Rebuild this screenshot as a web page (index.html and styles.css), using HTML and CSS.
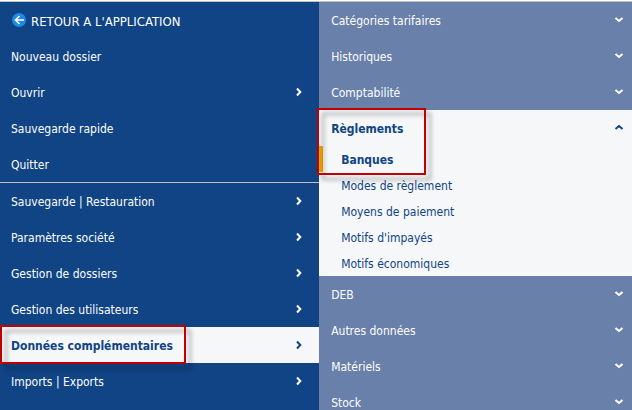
FILE: index.html
```html
<!DOCTYPE html>
<html lang="fr">
<head>
  <meta charset="UTF-8" />
  <meta name="viewport" content="width=device-width, initial-scale=1" />
  <title>Données complémentaires</title>
  <link rel="stylesheet" href="styles.css">
</head>
<body>
  <svg class="defs" aria-hidden="true">
    <symbol id="right" viewBox="0 0 8 10"><path d="M2 1.5 5.3 5 2 8.5" /></symbol>
    <symbol id="down" viewBox="0 0 10 8"><path d="M1.5 2 5 5 8.5 2" /></symbol>
    <symbol id="up" viewBox="0 0 10 8"><path d="M1.5 5 5 2 8.5 5" /></symbol>
  </svg>

  <div class="menu">
    <nav class="main-menu">
      <a class="item return" href="#">
        <svg class="back" viewBox="0 0 14 14" aria-hidden="true">
          <circle cx="7" cy="7" r="7" />
          <path d="M12 7H3.5M7.5 3l-4 4 4 4" />
        </svg>
        RETOUR A L'APPLICATION
      </a>
      <a class="item" href="#">Nouveau dossier</a>
      <button class="item">Ouvrir <svg class="arrow"><use href="#right" /></svg></button>
      <a class="item" href="#">Sauvegarde rapide</a>
      <a class="item" href="#">Quitter</a>
      <hr class="separator" />
      <button class="item">Sauvegarde | Restauration <svg class="arrow"><use href="#right" /></svg></button>
      <button class="item">Paramètres société <svg class="arrow"><use href="#right" /></svg></button>
      <button class="item">Gestion de dossiers <svg class="arrow"><use href="#right" /></svg></button>
      <button class="item">Gestion des utilisateurs <svg class="arrow"><use href="#right" /></svg></button>
      <button class="item active">
        <span class="marked">Données complémentaires</span>
        <svg class="arrow"><use href="#right" /></svg>
      </button>
      <button class="item">Imports | Exports <svg class="arrow"><use href="#right" /></svg></button>
    </nav>

    <nav class="sub-menu">
      <button class="item">Catégories tarifaires <svg class="chevron"><use href="#down" /></svg></button>
      <button class="item">Historiques <svg class="chevron"><use href="#down" /></svg></button>
      <button class="item">Comptabilité <svg class="chevron"><use href="#down" /></svg></button>
      <div class="open">
        <button class="item active" aria-expanded="true">Règlements <svg class="chevron"><use href="#up" /></svg></button>
        <a class="sub-item current" href="#">Banques</a>
        <a class="sub-item" href="#">Modes de règlement</a>
        <a class="sub-item" href="#">Moyens de paiement</a>
        <a class="sub-item" href="#">Motifs d'impayés</a>
        <a class="sub-item" href="#">Motifs économiques</a>
        <span class="frame"></span>
      </div>
      <button class="item">DEB <svg class="chevron"><use href="#down" /></svg></button>
      <button class="item">Autres données <svg class="chevron"><use href="#down" /></svg></button>
      <button class="item">Matériels <svg class="chevron"><use href="#down" /></svg></button>
      <button class="item">Stock <svg class="chevron"><use href="#down" /></svg></button>
    </nav>
  </div>
</body>
</html>
```

FILE: styles.css
```css
*,
*::after {
  box-sizing: border-box;
}
body {
  margin: 0;
  padding-top: 1px;
  height: 100vh;
  overflow: hidden;
  background: #fff;
  font-family: Tahoma, "DejaVu Sans Condensed", "DejaVu Sans", sans-serif;
  font-size: 12px;
}
.defs {
  display: none;
}
.menu {
  display: grid;
  grid-template-columns: 50.5% 1fr;
  min-height: 100%;
  border-top: 1px solid #c0c0c0;
}
.main-menu {
  background: #104484;
}
.sub-menu {
  background: #6980aa;
}
.item {
  position: relative;
  display: flex;
  align-items: center;
  width: 100%;
  height: 36px;
  padding: 2px 16px 0 11px;
  border: none;
  background: none;
  color: #fff;
  font: inherit;
  text-align: left;
  text-decoration: none;
}
.sub-menu .item {
  padding: 2px 8px 0 12px;
}
.return {
  font-size: 13px;
}
.active,
.sub-menu .active {
  background: #f5f7f9;
  color: #104484;
  font-weight: bold;
}
.separator {
  height: 1px;
  margin: 0;
  border: none;
  background: #c0c0c0;
}

/* icons */
.back {
  width: 14px;
  height: 14px;
  margin: 0 5px 2px 1px;
}
.back circle {
  fill: #1e88e5;
}
.back path {
  fill: none;
  stroke: #fff;
  stroke-width: 1.6;
}
.arrow,
.chevron {
  margin: 0 0 2px auto;
  fill: none;
  stroke: currentColor;
  stroke-width: 2;
}
.arrow {
  width: 8px;
  height: 10px;
}
.chevron {
  width: 10px;
  height: 8px;
}

/* opened section */
.open {
  position: relative;
  background: #f5f7f9;
}
.sub-item {
  display: flex;
  align-items: center;
  height: 26px;
  padding: 2px 0 0 22px;
  color: #104484;
  text-decoration: none;
}
.current {
  padding-left: 18px;
  border-left: 4px solid #f0ab00;
  font-weight: bold;
}

/* red frames */
.frame,
.marked::after {
  content: "";
  position: absolute;
  z-index: 1;
  border: 2px solid #c00000;
  filter: drop-shadow(5px 5px 2px rgba(0, 0, 0, 0.35));
  pointer-events: none;
}
.frame {
  top: -2px;
  left: -2px;
  width: 109px;
  height: 67px;
}
.marked::after {
  top: -2px;
  left: 0;
  width: 186px;
  height: 39px;
}
```
